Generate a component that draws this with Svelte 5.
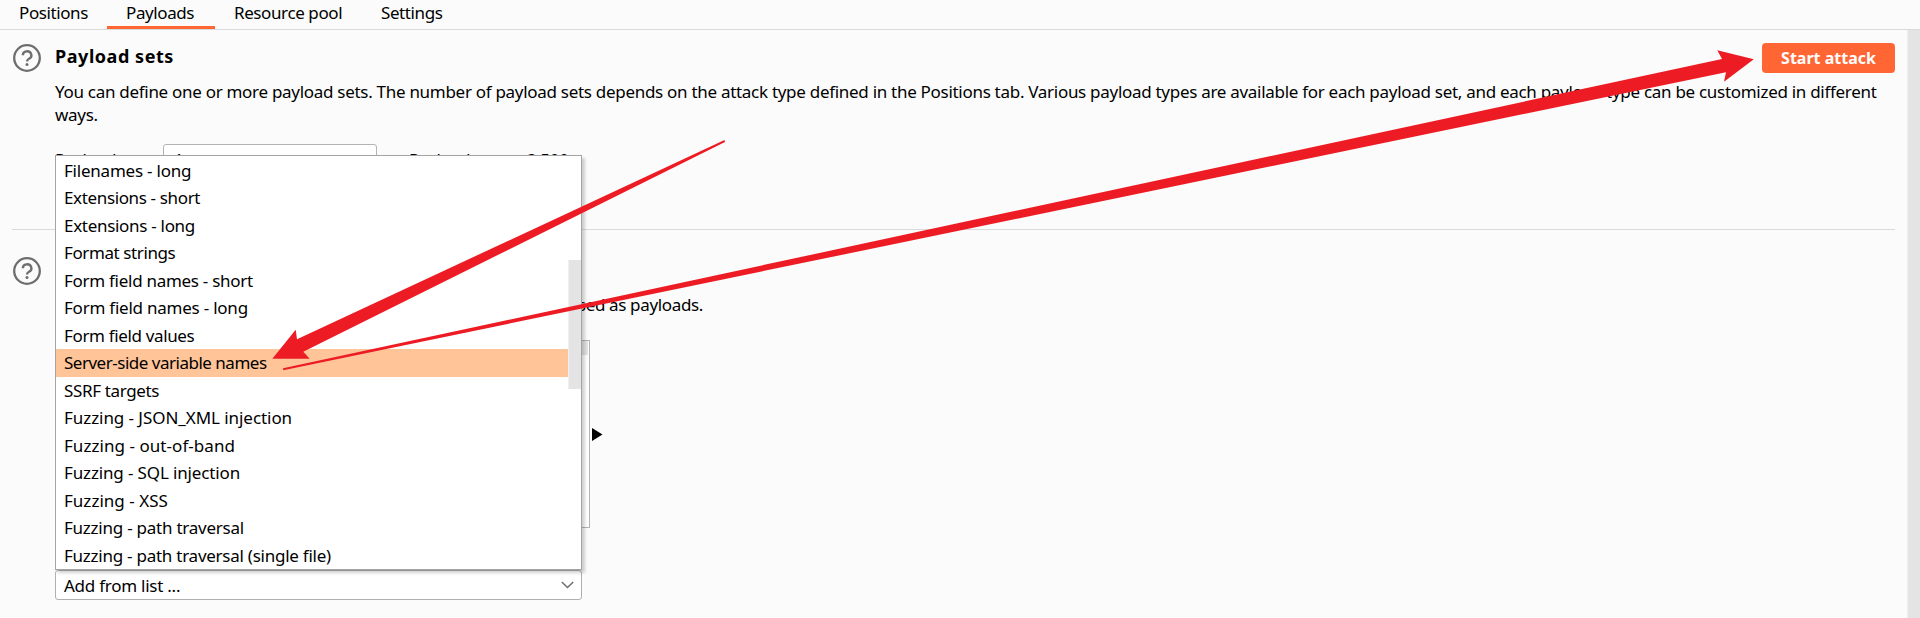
<script>
  const tabs = [
    { label: 'Positions', cls: 'positions' },
    { label: 'Payloads', cls: 'payloads' },
    { label: 'Resource pool', cls: 'resource' },
    { label: 'Settings', cls: 'settings' }
  ];
  const active = 'Payloads';

  // label and letter tracking in px
  const lists = [
    ['Filenames - long', -0.22],
    ['Extensions - short', -0.36],
    ['Extensions - long', -0.3],
    ['Format strings', -0.4],
    ['Form field names - short', -0.28],
    ['Form field names - long', -0.23],
    ['Form field values', -0.35],
    ['Server-side variable names', -0.49],
    ['SSRF targets', -0.36],
    ['Fuzzing - JSON_XML injection', -0.06],
    ['Fuzzing - out-of-band', 0.05],
    ['Fuzzing - SQL injection', -0.14],
    ['Fuzzing - XSS', 0.02],
    ['Fuzzing - path traversal', -0.24],
    ['Fuzzing - path traversal (single file)', -0.25]
  ];
  const selected = 'Server-side variable names';
</script>

{#snippet help()}
  <svg class="help" width="28" height="28" viewBox="0 0 28 28" fill="none" stroke="#6e6e6e">
    <circle cx="14" cy="14" r="12.8" stroke-width="2.3" />
    <path d="M9.8 11.2a4.3 3.9 0 1 1 6.2 3.5c-1.3.7-2 1.3-2 2.7" stroke-width="2.3" />
    <circle cx="14" cy="20.4" r="1.5" fill="#6e6e6e" stroke="none" />
  </svg>
{/snippet}

<div class="app">
  <nav>
    {#each tabs as tab}
      <div class="tab {tab.cls}" class:active={tab.label === active}><span>{tab.label}</span></div>
    {/each}
  </nav>

  <div class="body">
    <main>
      <section class="sets">
        {@render help()}
        <div class="content">
          <div class="head">
            <h2>Payload sets</h2>
            <button>Start attack</button>
          </div>
          <p class="intro">
            You can define one or more payload sets. The number of payload sets depends on the attack type defined in the Positions tab. Various payload types are available for each payload set, and each payload type can be customized in different<br />ways.
          </p>
          <div class="row">
            <span class="label">Payload set:</span>
            <div class="select">1</div>
            <span class="count">Payload count: 3,500</span>
          </div>
        </div>
      </section>

      <section class="options">
        {@render help()}
        <div class="content">
          <p class="about">used as payloads.</p>
          <div class="listrow">
            <div class="listbox"><i></i></div>
            <svg width="11" height="13" viewBox="0 0 11 13"><path d="M0 0L10.5 6.5L0 13z" fill="#000" /></svg>
          </div>
          <div class="combo">
            <span>Add from list ...</span>
            <svg width="13" height="8" viewBox="0 0 13 8" fill="none" stroke="#6e6e6e" stroke-width="1.5">
              <path d="M.8 1L6.5 6.5L12.2 1" />
            </svg>
            <div class="popup">
              <ul>
                {#each lists as [item, tracking]}
                  <li class:selected={item === selected} style="letter-spacing: {tracking}px">{item}</li>
                {/each}
              </ul>
              <div class="thumb"></div>
            </div>
          </div>
        </div>
      </section>
    </main>
    <div class="scrollbar"></div>
  </div>

  <svg class="arrows" width="1920" height="618" viewBox="0 0 1920 618" fill="#ed1c24">
    <path d="M724.5 139.9L297 339.3L295.7 329.7L272.3 358.8H309.7L303.3 351.7L725 142z" />
    <path d="M283 368.3L1722 59L1717.3 50.2L1753.8 59.3L1724 81.7L1726 72.3L283.3 370.2z" />
  </svg>
</div>

<style>
  :global(body) {
    background: #fbfbfb;
    overflow: hidden;
  }
  .app {
    position: relative;
    width: 1920px;
    height: 618px;
    overflow: hidden;
    display: flex;
    flex-direction: column;
    font-family: 'Noto Sans', 'Open Sans', sans-serif;
    font-size: 17px;
    color: #000;
    white-space: nowrap;
  }
  nav {
    display: flex;
    height: 29px;
    flex: none;
    border-bottom: 1px solid #dadada;
  }
  .tab {
    box-sizing: border-box;
    height: 29px;
    padding-left: 19px;
    line-height: 26px;
    letter-spacing: -0.4px;
  }
  .positions { width: 107px; }
  .payloads { width: 108px; }
  .resource { width: 147px; }
  .settings { width: 99px; }
  .active {
    border-bottom: 3px solid #ff6633;
  }
  .body {
    flex: 1;
    display: flex;
  }
  main {
    flex: 1;
    padding: 0 12px;
  }
  .scrollbar {
    width: 12px;
    background: #e4e4e4;
    border-left: 1px solid #eeeeee;
  }
  section {
    display: flex;
    box-sizing: border-box;
  }
  .content {
    flex: 1;
    min-width: 0;
    margin-left: 14px;
  }
  .help {
    flex: none;
    margin: 14px 0 0 1px;
  }
  .sets {
    height: 200px;
    padding-bottom: 20px;
    border-bottom: 1px solid #dadada;
  }
  .head {
    display: flex;
    justify-content: space-between;
    height: 43px;
  }
  h2 {
    margin: 13px 0 0;
    font-size: 18px;
    line-height: 26px;
    font-weight: 700;
    letter-spacing: 0.55px;
  }
  button {
    width: 133px;
    height: 30px;
    margin-top: 13px;
    padding: 0;
    border: 0;
    border-radius: 4px;
    background: #ff6633;
    color: #fff;
    font: 700 16px/30px 'Noto Sans', 'Open Sans', sans-serif;
  }
  p {
    margin: 0;
    line-height: 23px;
  }
  .intro {
    padding-top: 7px;
    letter-spacing: -0.291px;
  }
  .row {
    display: flex;
    align-items: flex-start;
    height: 30px;
    margin-top: 18px;
    line-height: 32px;
    letter-spacing: -0.3px;
  }
  .label {
    width: 108px;
  }
  .select {
    box-sizing: border-box;
    width: 214px;
    height: 30px;
    padding-left: 10px;
    border: 1px solid #b4b4b4;
    border-radius: 3px;
    background: #fff;
    line-height: 30px;
  }
  .count {
    margin-left: 32px;
  }
  .options {
    padding-top: 13px;
  }
  .about {
    width: 648px;
    padding-top: 50px;
    text-align: right;
    letter-spacing: -0.35px;
  }
  .listrow {
    display: flex;
    align-items: center;
    gap: 2px;
    margin: 24px 0 42px 108px;
  }
  .listbox {
    box-sizing: border-box;
    width: 427px;
    height: 188px;
    border: 1px solid #b4b4b4;
    background: #fff;
    display: flex;
    justify-content: flex-end;
    padding-right: 1px;
  }
  .listbox i {
    width: 13px;
    height: 14px;
    background: #e4e4e4;
  }
  .combo {
    position: relative;
    box-sizing: border-box;
    width: 527px;
    height: 30px;
    border: 1px solid #b0b0b0;
    border-radius: 3px;
    background: #fff;
    display: flex;
    align-items: center;
    justify-content: space-between;
    padding: 0 7px 0 8px;
    letter-spacing: -0.25px;
  }
  .popup {
    position: absolute;
    left: -1px;
    bottom: 29px;
    box-sizing: border-box;
    width: 527px;
    height: 415px;
    border: 1px solid #a4a4a4;
    background: #fff;
    box-shadow: 3px 3px 3px rgba(0, 0, 0, 0.18);
  }
  ul {
    list-style: none;
    margin: 0;
    padding: 0.5px 13px 0 0;
  }
  li {
    height: 27.5px;
    padding-left: 8px;
    line-height: 28px;
  }
  .selected {
    background: #ffc599;
  }
  .thumb {
    position: absolute;
    right: 0;
    top: 104px;
    width: 12px;
    height: 129px;
    background: #e4e4e4;
    border-left: 1px solid #f0f0f0;
  }
  .arrows {
    position: absolute;
    left: 0;
    top: 0;
  }
</style>
